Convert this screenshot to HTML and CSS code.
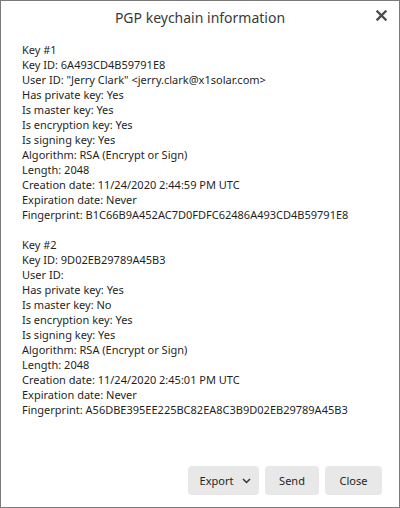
FILE: index.html
```html
<!DOCTYPE html>
<html lang="en">

<head>
  <meta charset="UTF-8">
  <title>PGP keychain information</title>
  <link rel="stylesheet" href="styles.css">
</head>

<body>
  <div class="dialog">
    <div class="dialog-header">
      <h1>PGP keychain information</h1>
      <button class="close-x" aria-label="Close">
        <svg width="11" height="11" viewBox="0 0 11 11">
          <path d="M1.5 1.5 L9.5 9.5 M9.5 1.5 L1.5 9.5" stroke="#4d4d4d" stroke-width="2.4" stroke-linecap="square" />
        </svg>
      </button>
    </div>

    <div class="dialog-body">
      <div class="key-info">
        <p>Key #1</p>
        <p>Key ID: 6A493CD4B59791E8</p>
        <p>User ID: "Jerry Clark" &lt;jerry.clark@x1solar.com&gt;</p>
        <p>Has private key: Yes</p>
        <p>Is master key: Yes</p>
        <p>Is encryption key: Yes</p>
        <p>Is signing key: Yes</p>
        <p>Algorithm: RSA (Encrypt or Sign)</p>
        <p>Length: 2048</p>
        <p>Creation date: 11/24/2020 2:44:59 PM UTC</p>
        <p>Expiration date: Never</p>
        <p>Fingerprint: B1C66B9A452AC7D0FDFC62486A493CD4B59791E8</p>
      </div>

      <div class="key-info">
        <p>Key #2</p>
        <p>Key ID: 9D02EB29789A45B3</p>
        <p>User ID:</p>
        <p>Has private key: Yes</p>
        <p>Is master key: No</p>
        <p>Is encryption key: Yes</p>
        <p>Is signing key: Yes</p>
        <p>Algorithm: RSA (Encrypt or Sign)</p>
        <p>Length: 2048</p>
        <p>Creation date: 11/24/2020 2:45:01 PM UTC</p>
        <p>Expiration date: Never</p>
        <p>Fingerprint: A56DBE395EE225BC82EA8C3B9D02EB29789A45B3</p>
      </div>
    </div>

    <div class="dialog-footer">
      <button class="btn btn-export">Export
        <svg width="9" height="6" viewBox="0 0 9 6">
          <path d="M1 1 L4.5 4.5 L8 1" fill="none" stroke="#333" stroke-width="1.5" />
        </svg>
      </button>
      <button class="btn btn-send">Send</button>
      <button class="btn btn-close">Close</button>
    </div>
  </div>
</body>

</html>
```

FILE: styles.css
```css
* {
  box-sizing: border-box;
  margin: 0;
  padding: 0;
}

body {
  font-family: 'Noto Sans', 'Open Sans', sans-serif;
  background: #fff;
  color: #1f1f1f;
}

.dialog {
  width: 400px;
  height: 508px;
  border: 1px solid #7a7a7a;
  display: flex;
  flex-direction: column;
  background: #fff;
}

.dialog-header {
  height: 40px;
  display: flex;
  align-items: center;
  justify-content: center;
  position: relative;
}

.dialog-header h1 {
  font-size: 14px;
  font-weight: 400;
  color: #3a3a3a;
  margin-top: -7px;
}

.close-x {
  position: absolute;
  right: 12px;
  top: 9px;
  border: none;
  background: none;
  width: 11px;
  height: 11px;
  display: flex;
}

.dialog-body {
  flex: 1;
  padding: 1px 21px 0;
  font-size: 11px;
  line-height: 15px;
}

.key-info {
  margin-bottom: 15px;
}

.dialog-footer {
  display: flex;
  justify-content: flex-end;
  gap: 6px;
  padding: 0 17px 12px;
}

.btn {
  height: 29px;
  border: none;
  border-radius: 4px;
  background: #e8e8e8;
  font-family: inherit;
  font-size: 11px;
  color: #1f1f1f;
  display: flex;
  align-items: center;
  justify-content: center;
}

.btn-export {
  width: 71px;
  gap: 9px;
  padding-left: 4px;
}

.btn-send {
  width: 54px;
}

.btn-close {
  width: 57px;
}
```
